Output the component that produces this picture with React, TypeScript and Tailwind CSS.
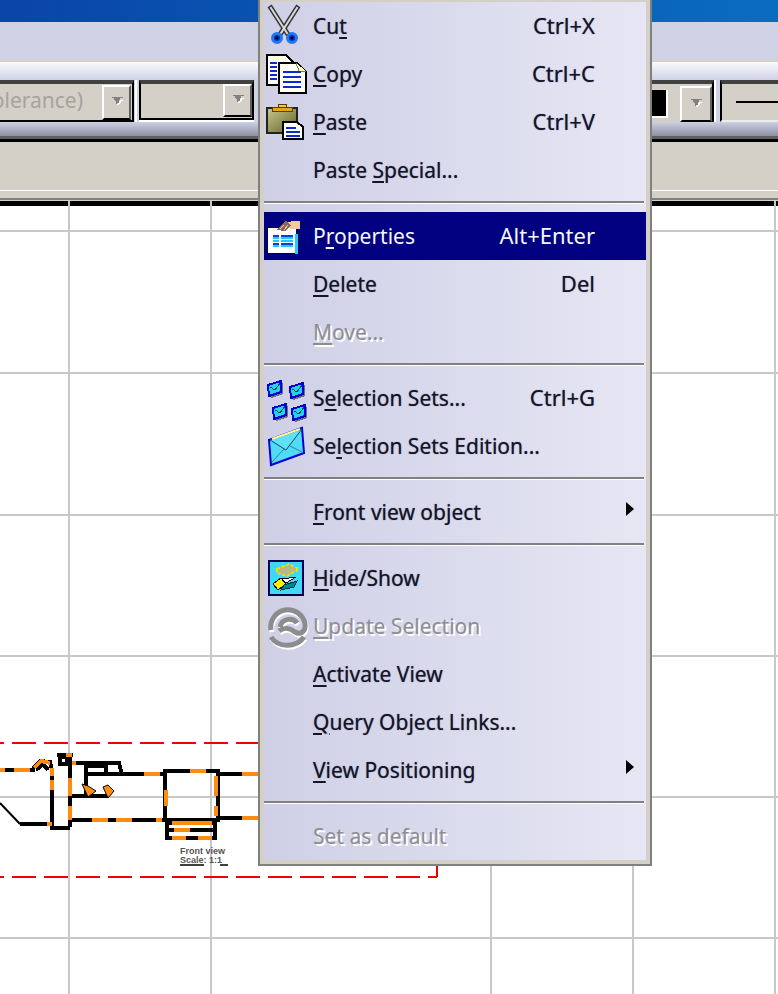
const blackLines = [
  "M0 770H35",
  "M32 770L40 761L50 762L52 770",
  "M36 770L43 764L48 770",
  "M52 768V828H70",
  "M70 755V827",
  "M57 755H73",
  "M60 757H67V764H60Z",
  "M70 763H119L122 775",
  "M84 766H106",
  "M86 763V796",
  "M106 763V774",
  "M86 774H163",
  "M68 796H108",
  "M70 820H163",
  "M20 824H52",
  "M218 774H258",
  "M218 818H258",
  "M168 823H215",
  "M168 830H215",
  "M165 771H218V820H165Z",
  "M167 820V838H215V820",
  "M218 806V816",
]

const orangeLines = [
  "M0 770H5",
  "M14 770H30",
  "M34 768L41 761L50 763",
  "M52 768V776",
  "M52 780V790",
  "M47 824H52",
  "M70 778V796",
  "M70 806V820",
  "M66 755H72",
  "M72 763H76",
  "M144 774H160",
  "M92 820H108",
  "M116 820H132",
  "M156 820H162",
  "M190 771H206",
  "M166 790V806",
  "M216 776V796",
  "M216 806V816",
  "M242 774H258",
  "M242 818H258",
  "M172 823H212",
  "M174 830H190",
  "M172 838H186",
  "M198 838H212",
]

function Canvas() {
  return (
    <div className="flex-1 bg-white border-t-[5px] border-black">
      <svg width="778" height="793" viewBox="0 201 778 793" className="-mt-[5px] block">
        <g stroke="#c8c8c8" strokeWidth="2">
          <path d="M69 201V994M211 201V994M491 201V994M633 201V994M775 201V994" />
          <path d="M0 231H778M0 373H778M0 515H778M0 656H778M0 797H778M0 938H778" />
        </g>
        <g fill="none" stroke="#f00000" strokeWidth="2" strokeDasharray="24 8">
          <path d="M-20 743H258" />
          <path d="M-20 877H437" />
          <path d="M437 866V877" />
        </g>
        <path d="M0 803L20 824" stroke="#000" strokeWidth="2" />
        <g fill="none" stroke="#000" strokeWidth="4" shapeRendering="crispEdges">
          {blackLines.map((d) => <path key={d} d={d} />)}
        </g>
        <g fill="none" stroke="#ff8c10" strokeWidth="4" shapeRendering="crispEdges">
          {orangeLines.map((d) => <path key={d} d={d} />)}
        </g>
        <path d="M82 784L88 786L96 791L88 797ZM103 787L108 785L114 791L108 798Z" fill="#ff8c10" stroke="#000" strokeWidth="1" />
        <g fontFamily="Liberation Sans, sans-serif" fontSize="9" fontWeight="700" fill="#555">
          <text x="180" y="854">Front view</text>
          <text x="180" y="863">Scale:  1:1</text>
        </g>
        <path d="M180 865H204M220 865H228" stroke="#000" strokeWidth="1.5" />
      </svg>
    </div>
  )
}

function ArrowGlyph() {
  return (
    <svg width="16" height="11" viewBox="0 0 14 10" shapeRendering="crispEdges">
      <path d="M2 0H12V1H10V3H9V5H7V6H6V4H5V3H4V1H2Z" fill="#808080" />
      <path d="M10 3H12V4H11V5H10V6H9V7H7V6H8V5H9V4H10Z" fill="#fff" />
    </svg>
  )
}

function DropButton({ className }: { className: string }) {
  return (
    <div className={"shrink-0 flex items-center justify-center bg-[#d4d0c8] border-2 border-l-white border-t-white border-r-[#606060] border-b-black " + className}>
      <ArrowGlyph />
    </div>
  )
}

function Toolbar() {
  return (
    <div className="h-[74px] flex flex-col">
      <div className="h-[18px] bg-linear-to-b from-[#fafafd] to-[#d0d2e6]"></div>
      <div className="h-[42px] flex bg-[#d0d2e6]">
        <div className="w-[137px] shrink-0 h-[45px] pr-[1px] border-b-2 border-r-2 border-white">
          <div className="h-[42px] flex items-center justify-end overflow-hidden bg-[#d4d0c8] border-t-4 border-t-[#404040] border-r-2 border-b-2 border-black">
            <span className="text-[#a5a39d] text-[21px] leading-none whitespace-nowrap mr-[19px] mb-[3px]">olerance)</span>
            <DropButton className="w-[29px] h-[35px] mr-[1px]" />
          </div>
        </div>
        <div className="w-[115px] shrink-0 ml-[2px] h-[42px] border-b-2 border-white">
          <div className="h-[40px] flex justify-end bg-[#d4d0c8] border-t-4 border-t-[#404040] border-l-2 border-l-black border-r-2 border-r-black border-b-2 border-b-black">
            <DropButton className="w-[29px] h-[33px]" />
          </div>
        </div>
        <div className="flex-1"></div>
        <div className="w-[68px] shrink-0 h-[42px] flex bg-[#d4d0c8] border-t-4 border-t-[#404040] border-r-2 border-r-black">
          <div className="w-[22px] h-[28px] mt-[6px] bg-black border-r-2 border-b-2 border-white"></div>
          <DropButton className="w-[32px] h-[36px] ml-[12px] mt-[2px]" />
        </div>
        <div className="w-[2px] shrink-0 bg-white"></div>
        <div className="w-[58px] shrink-0 ml-[4px] flex items-center pl-[14px] bg-[#d4d0c8] border-t-4 border-t-[#404040] border-l-2 border-l-black border-b-2 border-b-[#ededed]">
          <div className="w-[50px] h-[2px] bg-black shrink-0"></div>
        </div>
      </div>
      <div className="h-[14px] bg-linear-to-b from-[#cdcfe2] to-[#8f90a6]"></div>
    </div>
  )
}

function ScissorsIcon() {
  return (
    <svg width="48" height="48" viewBox="0 0 48 48">
      <g fill="none" strokeLinecap="square">
        <path d="M7 6L23 31M33 6L17 31" stroke="#333" strokeWidth="5" />
        <path d="M7 6L23 31M33 6L17 31" stroke="#d8d8d8" strokeWidth="2" />
      </g>
      <circle cx="13" cy="36" r="4.5" fill="#0c2cc0" stroke="#1e78f0" strokeWidth="3" />
      <circle cx="28" cy="36" r="4.5" fill="#0c2cc0" stroke="#1e78f0" strokeWidth="3" />
      <circle cx="13" cy="36" r="1.5" fill="#000" />
      <circle cx="28" cy="36" r="1.5" fill="#000" />
    </svg>
  )
}

function CopyIcon() {
  return (
    <svg width="48" height="48" viewBox="0 0 48 48" shapeRendering="crispEdges">
      <path d="M3 5H22L29 12V35H3Z" fill="#fffff0" stroke="#000" strokeWidth="2" />
      <path d="M6 13H13M6 17H13M6 21H13M6 25H13M6 29H13" stroke="#0a2cc8" strokeWidth="2" />
      <path d="M15 13H33L42 22V43H15Z" fill="#fffff0" stroke="#000" strokeWidth="2" />
      <path d="M32 13L35 21H42" fill="#ffffb0" stroke="#777" strokeWidth="1" />
      <path d="M19 22H37M19 27H37M19 32H37M19 37H37" stroke="#0a2cc8" strokeWidth="2" />
    </svg>
  )
}

function PasteIcon() {
  return (
    <svg width="48" height="48" viewBox="0 0 48 48" shapeRendering="crispEdges">
      <defs>
        <linearGradient id="board" x1="0" y1="0" x2="1" y2="1">
          <stop offset="0" stopColor="#c8c890" />
          <stop offset="0.6" stopColor="#8a8a50" />
          <stop offset="1" stopColor="#50502c" />
        </linearGradient>
      </defs>
      <rect x="3" y="10" width="30" height="25" fill="url(#board)" stroke="#222" strokeWidth="2" />
      <rect x="8" y="9" width="20" height="4" fill="#e0a810" stroke="#504000" strokeWidth="1" />
      <rect x="14" y="6" width="8" height="3" fill="#f4c838" stroke="#504000" strokeWidth="1" />
      <path d="M19 24H33L39 29V41H19Z" fill="#fffff0" stroke="#000" strokeWidth="2" />
      <path d="M22 30H32M22 34H36M22 38H36" stroke="#0a2cc8" strokeWidth="2" />
    </svg>
  )
}

function PropertiesIcon() {
  return (
    <svg width="48" height="48" viewBox="0 0 48 48" shapeRendering="crispEdges">
      <rect x="3" y="15" width="30" height="27" fill="#000050" />
      <rect x="4" y="16" width="28" height="25" fill="#fff" />
      <rect x="31" y="22" width="3" height="20" fill="#18d0f8" />
      <path d="M9 26H15M17 26H29M9 29H15M17 29H29M9 34H15M17 34H29" stroke="#18d0f8" strokeWidth="2" />
      <path d="M9 24H15M17 24H29M9 32H15M17 32H29" stroke="#0a40e0" strokeWidth="2" />
      <path d="M22 11L28 9H36V17H26Z" fill="#f4c8a0" />
      <path d="M12 18L22 9L27 13L22 19Z" fill="#8c6858" />
      <path d="M16 17L20 13M20 18L24 13" stroke="#f4c8a0" strokeWidth="1" />
    </svg>
  )
}

function SmallEnvelope({ x, y }: { x: number; y: number }) {
  return (
    <g transform={`translate(${x} ${y})`}>
      <path d="M3 6L16 2V13L4 17Z" fill="#707070" />
      <path d="M1 4L14 0V11L2 15Z" fill="#20d4f0" stroke="#0000d8" strokeWidth="2" />
      <path d="M3 6L8 9L13 2" fill="none" stroke="#004060" strokeWidth="1" />
    </g>
  )
}

function SetsIcon() {
  return (
    <svg width="48" height="48" viewBox="0 0 48 48" shapeRendering="crispEdges">
      <SmallEnvelope x={3} y={7} />
      <SmallEnvelope x={25} y={9} />
      <SmallEnvelope x={8} y={30} />
      <SmallEnvelope x={27} y={31} />
    </svg>
  )
}

function EnvelopeIcon() {
  return (
    <svg width="48" height="48" viewBox="0 0 48 48">
      <path d="M5 18L38 6L40 31L7 43Z" fill="#50dcf8" stroke="#0000d0" strokeWidth="2" />
      <path d="M6 18L38 7L22 28Z" fill="#60e0f8" stroke="#104868" strokeWidth="1" />
      <path d="M8 17L36 7" stroke="#fff8a0" strokeWidth="2" />
      <path d="M8 40L20 27M38 30L26 24" stroke="#408090" strokeWidth="1" />
    </svg>
  )
}

function HideShowIcon() {
  return (
    <svg width="48" height="48" viewBox="0 0 48 48" shapeRendering="crispEdges">
      <rect x="5" y="7" width="34" height="34" fill="#40d8f8" stroke="#000050" strokeWidth="2" />
      <path d="M13 15L25 10L35 15L23 22L13 19Z" fill="#b8b880" stroke="#e8e000" strokeWidth="2" strokeDasharray="3 2" />
      <path d="M9 30L17 24L22 30L14 36Z" fill="#fff000" stroke="#000" strokeWidth="1" />
      <path d="M20 31L33 27L30 33L17 36Z" fill="#008890" stroke="#003040" strokeWidth="1" />
      <path d="M18 25L32 23L22 29Z" fill="#fff" stroke="#000" strokeWidth="1" />
    </svg>
  )
}

const updateSwirl = "M7 28A17 17 0 0 1 41 22C42 30 36 33 31 30C26 26 20 25 15 29M16 25C18 16 29 15 33 21M7 35C14 46 32 46 40 35"

function UpdateIcon() {
  return (
    <svg width="48" height="48" viewBox="0 0 48 48">
      <g fill="none" strokeWidth="5">
        <path d={updateSwirl} stroke="#fff" transform="translate(1 2)" />
        <path d={updateSwirl} stroke="#8c8c8c" />
      </g>
    </svg>
  )
}

type RowProps = {
  label: React.ReactNode
  shortcut?: string
  icon?: React.ReactNode
  active?: boolean
  disabled?: boolean
  submenu?: boolean
}

function Row({ label, shortcut, icon, active, disabled, submenu }: RowProps) {
  const tone = active
    ? "bg-[#000080] text-[#f4f8ff]"
    : disabled
      ? "text-[#8e8e92] [text-shadow:2px_2px_0_#ffffff]"
      : "text-[#14142a] [text-shadow:0_0_1px_rgba(20,20,42,0.6)]"
  return (
    <div className={"h-12 flex items-center " + tone}>
      <div className="w-12 h-12 shrink-0 mr-[1px]">{icon}</div>
      <span className="flex-1 whitespace-nowrap pt-[1px]">{label}</span>
      {shortcut && <span className="mr-[51px] whitespace-nowrap text-[22px] pb-[2px]">{shortcut}</span>}
      {submenu && (
        <svg width="8" height="14" viewBox="0 0 8 14" className="mr-[12px] -mt-[6px]">
          <path d="M0 0L8 7L0 14Z" fill="#000" />
        </svg>
      )}
    </div>
  )
}

function Sep() {
  return (
    <div className="h-[18px] pt-[7px]">
      <div className="h-[3px] mr-[2px] border-t-2 border-[#808080] border-b border-b-white"></div>
    </div>
  )
}

function Key({ children }: { children: React.ReactNode }) {
  return <span className="underline underline-offset-[3px] decoration-2">{children}</span>
}

function ContextMenu() {
  return (
    <div className="absolute left-[258px] top-0 w-[394px] h-[866px] bg-[#d4d0c8] border-x-2 border-b-2 border-[#808080] pt-[2px] pl-1 pr-1 pb-1 font-['Noto_Sans',sans-serif] text-[21px]">
      <div className="h-[858px] bg-linear-to-r from-[#cfd0e6] to-[#e6e6f4]">
        <Row icon={<ScissorsIcon />} label={<>Cu<Key>t</Key></>} shortcut="Ctrl+X" />
        <Row icon={<CopyIcon />} label={<><Key>C</Key>opy</>} shortcut="Ctrl+C" />
        <Row icon={<PasteIcon />} label={<><Key>P</Key>aste</>} shortcut="Ctrl+V" />
        <Row label={<>Paste <Key>S</Key>pecial...</>} />
        <Sep />
        <Row active icon={<PropertiesIcon />} label={<>P<Key>r</Key>operties</>} shortcut="Alt+Enter" />
        <Row label={<><Key>D</Key>elete</>} shortcut="Del" />
        <Row disabled label={<><Key>M</Key>ove...</>} />
        <Sep />
        <Row icon={<SetsIcon />} label={<>S<Key>e</Key>lection Sets...</>} shortcut="Ctrl+G" />
        <Row icon={<EnvelopeIcon />} label={<>Se<Key>l</Key>ection Sets Edition...</>} />
        <Sep />
        <Row label={<><Key>F</Key>ront view object</>} submenu />
        <Sep />
        <Row icon={<HideShowIcon />} label={<><Key>H</Key>ide/Show</>} />
        <Row disabled icon={<UpdateIcon />} label={<><Key>U</Key>pdate Selection</>} />
        <Row label={<><Key>A</Key>ctivate View</>} />
        <Row label={<><Key>Q</Key>uery Object Links...</>} />
        <Row label={<><Key>V</Key>iew Positioning</>} submenu />
        <Sep />
        <Row disabled label="Set as default" />
      </div>
    </div>
  )
}

export default function App() {
  return (
    <div className="relative w-[778px] h-[994px] overflow-hidden flex flex-col bg-white font-['Noto_Sans',sans-serif]">
      <div className="h-[22px] bg-linear-to-r from-[#0a45a8] to-[#0a6cc0]"></div>
      <div className="h-[38px] bg-[#d0d2e6]"></div>
      <div className="h-[2px] bg-[#d4d0c8]"></div>
      <Toolbar />
      <div className="h-[3px] bg-[#606060]"></div>
      <div className="h-[3px] bg-black"></div>
      <div className="h-[49px] bg-[#d4d0c8] border-b border-white"></div>
      <div className="h-[9px] bg-[#d4d0c8] border-b-2 border-[#808080]"></div>
      <div className="h-px bg-[#d4d0c8]"></div>
      <Canvas />
      <ContextMenu />
    </div>
  )
}
